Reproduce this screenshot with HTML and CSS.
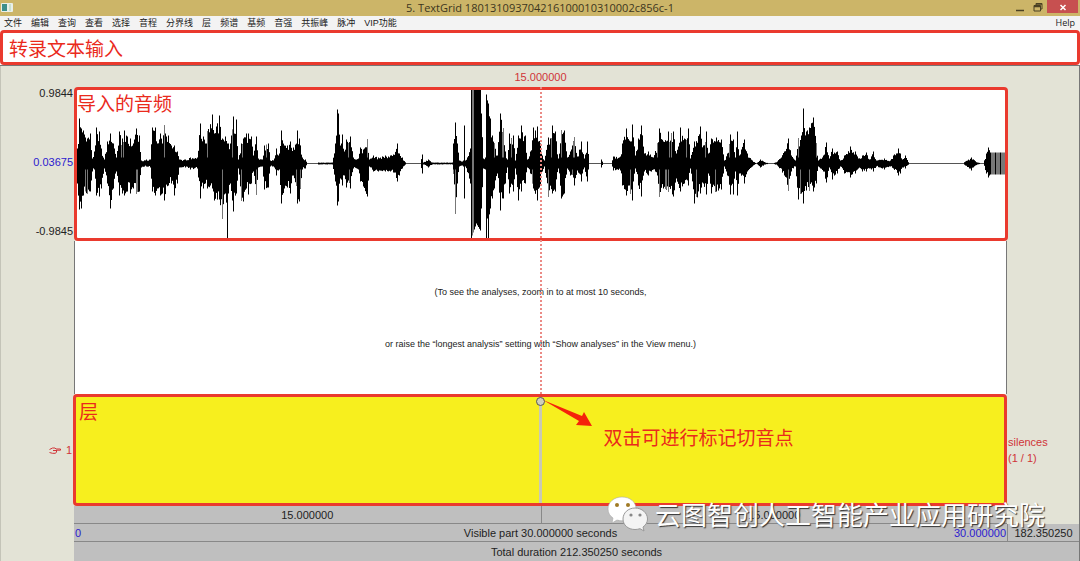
FILE: index.html
```html
<!DOCTYPE html>
<html lang="zh-CN">
<head>
<meta charset="utf-8">
<title>TextGrid</title>
<link rel="stylesheet" href="styles.css">
</head>
<body>
<header class="titlebar">
  <svg class="app-icon" viewBox="0 0 12 9" aria-hidden="true"><rect width="12" height="9" rx="1" fill="#e9efe9"/><rect x="1" y="1" width="5" height="7" fill="#3d8f8b"/><rect x="8" y="1" width="2" height="7" fill="#c9e0cf"/></svg>
  <h1 class="title">5. TextGrid 180131093704216100010310002c856c-1</h1>
  <div class="window-buttons">
    <button class="win-btn" type="button" aria-label="最小化"><svg class="win-icon" viewBox="0 0 10 10"><path d="M1 8.500h8" stroke="#4a4023" stroke-width="1.500"/></svg></button>
    <button class="win-btn" type="button" aria-label="还原"><svg class="win-icon" viewBox="0 0 10 10" fill="none" stroke="#4a4023"><path d="M3 3V1.500h6V7H7.500"/><path d="M1 3.500h6.500V9H1z"/><path d="M1 4.500h6.500M3 2h6" stroke-width="1.400"/></svg></button>
    <button class="win-btn close" type="button" aria-label="关闭"><svg class="win-icon" viewBox="0 0 10 10"><path d="M2.500 3l5 5M7.500 3l-5 5" stroke="#fff" stroke-width="1.500"/></svg></button>
  </div>
</header>
<nav class="menubar">
  <button type="button">文件</button>
  <button type="button">编辑</button>
  <button type="button">查询</button>
  <button type="button">查看</button>
  <button type="button">选择</button>
  <button type="button">音程</button>
  <button type="button">分界线</button>
  <button type="button">层</button>
  <button type="button">频谱</button>
  <button type="button">基频</button>
  <button type="button">音强</button>
  <button type="button">共振峰</button>
  <button type="button">脉冲</button>
  <button type="button">VIP功能</button>
  <button type="button" class="help">Help</button>
</nav>
<div class="transcript"><input class="transcript-input marked" type="text" aria-label="转录文本" value="转录文本输入"></div>
<main class="editor">
  <div class="gutter levels">
    <span>0.9844</span>
    <span class="blue">0.03675</span>
    <span>-0.9845</span>
  </div>
  <div class="cursor-time">15.000000</div>
  <section class="wave marked">
    <svg class="wave-plot" viewBox="77 0 928 148" preserveAspectRatio="none" aria-hidden="true">
      <path class="axis" d="M77 73.500H1005"/>
      <path id="signal" class="signal"/>
      <path id="fringe" class="fringe"/>
    </svg>
    <h2 class="note">导入的音频</h2>
  </section>
  <section class="analyses">
    <p>(To see the analyses, zoom in to at most 10 seconds,</p>
    <p>or raise the “longest analysis” setting with “Show analyses” in the View menu.)</p>
  </section>
  <div class="cursor-line"></div>
  <div class="gutter tier-number">
    <svg class="hand" viewBox="0 0 12 7" aria-hidden="true"><path d="M.5 2.500L3.500 1h2.500l1 1h4.500v1.200H7.500M.5 5.500l3 .8h3l1-1.300V3" fill="none" stroke="#d03438"/><path d="M4 3h4v1H4z" fill="#d03438"/></svg>
    <span>1</span>
  </div>
  <section class="tier marked">
    <h2 class="note">层</h2>
    <div class="boundary"><span class="handle"></span></div>
    <div class="callout">
      <svg class="arrow" viewBox="0 0 50 28" aria-hidden="true"><path d="M0 0L39 16l2-4 8 14-16-1 3-4z" fill="#f5230a"/></svg>
      <span>双击可进行标记切音点</span>
    </div>
  </section>
  <div class="gutter tier-name"><span>silences</span><span>(1 / 1)</span></div>
  <div class="bar halves"><button type="button">15.000000</button><button type="button">15.000000</button></div>
  <div class="bar visible">
    <span class="blue">0</span><button type="button">Visible part 30.000000 seconds</button><span class="blue end">30.000000</span>
  </div>
  <button class="bar rest" type="button">182.350250</button>
  <button class="bar total" type="button">Total duration 212.350250 seconds</button>
</main>
<aside class="watermark">
  <svg class="wechat" viewBox="0 0 42 36" aria-hidden="true">
    <path d="M15 1C7 1 1 6 1 13c0 4 2 7 5 9l-1 5 5-3c2 .6 3 .8 5 .8 8 0 14-5 14-12S23 1 15 1z" fill="#fff" stroke="#aaa" stroke-width=".6"/>
    <path d="M28 12c-7 0-12 5-12 11s5 10.500 12 10.500c2 0 3-.3 5-.8l4 2.300-1-4c3-2 4.500-5 4.500-8 0-6-5.500-11-12.500-11z" fill="#f4f4f4" stroke="#999" stroke-width="1"/>
    <g fill="#a07a25"><circle cx="10" cy="9" r="2"/><circle cx="21" cy="9" r="2"/></g>
    <g fill="#888"><circle cx="24" cy="19" r="1.600"/><circle cx="33" cy="19" r="1.600"/></g>
  </svg>
  <span>云图智创人工智能产业应用研究院</span>
</aside>
<script src="wave.js"></script>
</body>
</html>
```
FILE: styles.css
```css
* { box-sizing: border-box; }

body {
  margin: 0;
  min-height: 100vh;
  display: flex;
  flex-direction: column;
  position: relative;
  background: #e3e3d6;
  color: #222;
  font: 11px/16px "Liberation Sans", "Noto Sans CJK SC", sans-serif;
}

button {
  margin: 0;
  padding: 0;
  border: 0;
  background: none;
  color: inherit;
  font: inherit;
}

h1, h2, p { margin: 0; font-weight: 400; }

.blue { color: #2c20cf; }

.marked {
  border: 3px solid #ea3a2e;
  border-radius: 4px;
}

.titlebar {
  display: grid;
  grid-template-columns: 1fr auto 1fr;
  height: 16px;
  background: #ccb568;
}
.app-icon { width: 12px; height: 9px; margin: 3px 0 0 1px; }
.title { font: 11px/16px "Open Sans", sans-serif; color: #3c3520; }
.window-buttons { display: flex; justify-content: flex-end; padding-right: 2px; }
.win-btn { width: 18px; height: 13px; display: grid; place-items: center; }
.win-btn.close { width: 31px; background: #c75050; }
.win-icon { width: 10px; height: 10px; }

.menubar {
  display: flex;
  gap: 9px;
  height: 14px;
  padding: 0 5px 0 4px;
  background: #f3f3f3;
  font: 9px/14px "Liberation Sans", "Noto Sans CJK SC", sans-serif;
}
.help { margin-left: auto; font-family: "Open Sans", sans-serif; }

.transcript { height: 36px; border-bottom: 1px solid #777; background: #fff; }
.transcript-input {
  display: block;
  width: 100%;
  height: 35px;
  padding: 0 6px;
  background: #fff;
  color: #ea2a1c;
  font: 19px/28px "Noto Sans CJK SC", sans-serif;
}

.editor {
  flex: 1;
  display: grid;
  position: relative;
  grid-template-columns: 73px 1fr 72px;
  grid-template-rows: 21px 154fr 153fr 112fr 18px 18px 19px;
  border-left: 1px solid #c4c4b8;
  border-right: 1px solid #777;
  border-bottom: 1px solid #777;
}

.gutter { color: #222; }
.levels {
  grid-area: 2 / 1;
  display: flex;
  flex-direction: column;
  justify-content: space-between;
  align-items: flex-end;
  padding: 0 1px 2px 0;
  margin-top: -2px;
}
.cursor-time { grid-area: 1 / 2; text-align: center; line-height: 22px; color: #d03438; }

.wave {
  grid-area: 2 / 2;
  display: grid;
  margin-right: -1px;
  background: #fff;
}
.wave > * { grid-area: 1 / 1; }
.wave-plot { width: 100%; height: 100%; }
.axis { stroke: #555; stroke-width: 1; }
.signal { stroke: #000; stroke-width: 1; }
.fringe { stroke: #777; stroke-width: 1; }
.note { color: #ea2a1c; font: 19px/26px "Noto Sans CJK SC", sans-serif; }

.analyses {
  grid-area: 3 / 2;
  display: flex;
  flex-direction: column;
  justify-content: center;
  gap: 36px;
  border: solid #777;
  border-width: 0 1px;
  background: #fff;
  text-align: center;
  font-size: 9px;
}

.cursor-line {
  grid-area: 2 / 2 / 4 / 3;
  justify-self: center;
  width: 0;
  z-index: 1;
  border-left: 2px dotted #eb8a85;
}

.tier-number {
  grid-area: 4 / 1;
  display: flex;
  justify-content: flex-end;
  align-items: center;
  gap: 5px;
  padding-right: 2px;
  color: #d03438;
}
.hand { width: 12px; height: 7px; }

.tier {
  grid-area: 4 / 2;
  display: grid;
  grid-template-columns: 1fr 5px 1fr;
  margin: 0 0 0 -1px;
  background: #f7ef1e;
}
.tier .note { padding: 1px 0 0 3px; }
.boundary { display: flex; justify-content: center; background: #c9c9b4; width: 3px; justify-self: center; }
.handle {
  flex: none;
  width: 9px;
  height: 9px;
  border: 1px solid #555;
  border-radius: 50%;
  background: #d0d0b8;
}
.callout {
  display: flex;
  gap: 11px;
  padding-top: 3px;
  color: #ea2a1c;
  font: 19px/26px "Noto Sans CJK SC", sans-serif;
}
.callout span { padding-top: 24px; }
.arrow { width: 50px; height: 28px; }

.tier-name {
  grid-area: 4 / 3;
  display: flex;
  flex-direction: column;
  justify-content: center;
  padding-left: 1px;
  color: #d03438;
}

.bar { background: #bfbfbf; border-bottom: 1px solid #888; line-height: 18px; }
.halves { grid-area: 5 / 2; display: grid; grid-template-columns: 1fr 1fr; }
.halves button + button { border-left: 1px solid #888; }
.visible { grid-area: 6 / 2; display: grid; grid-template-columns: 1fr auto 1fr; padding: 0 1px; }
.end { text-align: right; }
.rest { grid-area: 6 / 3; border-left: 1px solid #888; }
.total { grid-area: 7 / 2 / 8 / 4; border-bottom: 0; }

.watermark {
  position: absolute;
  right: 35px;
  bottom: 29px;
  z-index: 2;
  display: flex;
  align-items: center;
  gap: 6px;
  color: #fff;
  font: 26px/38px "Noto Sans CJK SC", sans-serif;
  text-shadow: 1px 1px 1px #333;
}
.wechat { width: 42px; height: 36px; }
```
FILE: wave.js
```js
// Envelope samples: x, peak above the axis, peak below the axis.
const envelope = `77 15 20,79 45 46,81 35 45,83 33 32,87 25 30,90 30 28,92 5 8,94 12 6,96 36 32,99 32 33,101 15 25,104 4 5,
107 22 20,110 30 45,113 20 25,116 6 8,119 32 32,122 25 30,124 33 32,127 27 28,130 25 30,133 20 25,136 35 30,139 28 28,141 3 4,
146 4 3,150 4 4,152 36 28,155 36 32,157 20 25,160 30 32,162 20 30,164 38 37,168 28 22,171 18 20,174 18 32,177 12 20,179 4 4,
185 4 4,190 6 6,197 6 5,200 40 35,203 27 25,207 32 25,212 49 25,214 30 37,219 48 36,222 25 55,225 27 30,227 20 75,228 20 30,230 20 20,
233 47 48,236 44 30,238 4 5,241 20 37,243 25 38,246 30 25,248 30 31,251 27 20,253 8 8,256 27 31,258 5 4,262 4 3,264 18 26,268 20 24,
270 3 3,274 5 4,276 15 12,279 10 6,281 33 40,284 18 25,287 18 24,290 22 30,293 16 12,297 33 40,299 25 38,302 6 6,305 4 5,307 0 0,
316 0 0,318 1 1,332 1 1,335 20 18,337 54 42,338 50 38,340 18 15,342 29 22,344 12 12,346 24 24,350 27 25,353 6 5,358 5 6,360 16 18,
363 14 23,367 24 33,369 4 3,373 8 8,378 6 8,385 8 8,390 8 8,393 9 9,397 20 18,399 10 12,402 6 5,406 0 0,420 0 0,422 9 10,423 1 1,
428 4 4,432 1 1,452 1 1,453 20 10,455 41 50,457 20 20,459 3 3,463 3 3,464 38 35,465 3 3,470 15 20,471 74 75,476 74 60,480 74 67,481 50 45,
483 5 5,485 6 6,486 69 75,488 60 75,490 45 45,492 28 35,494 20 25,497 8 10,500 50 47,503 35 35,505 12 20,507 4 4,509 30 30,513 28 28,
515 3 5,518 28 37,521 38 28,525 28 20,527 4 4,530 12 10,533 36 25,537 37 37,540 20 22,542 8 8,544 3 3,548 26 33,552 38 30,555 32 28,
558 5 5,561 33 35,564 33 30,567 6 5,570 12 12,574 26 22,577 7 7,581 22 18,584 5 4,587 22 18,589 0 0,600 0 0,601 4 4,603 0 0,611 0 0,
613 7 7,620 7 7,622 20 22,626 35 32,630 22 30,632 39 37,635 8 5,638 25 22,641 38 33,644 10 8,648 12 12,653 6 6,657 20 12,659 35 33,
663 22 25,668 32 28,673 32 33,676 10 15,680 36 28,684 25 20,688 35 22,690 5 5,694 22 40,700 37 30,703 18 20,706 32 31,708 10 10,
711 25 30,716 26 28,721 24 26,724 3 3,727 10 12,730 29 31,733 24 31,735 6 8,737 32 32,739 8 10,744 24 20,747 10 8,752 3 3,756 0 0,
760 4 4,765 1 1,772 0 0,777 2 2,784 12 12,788 25 27,791 8 8,795 3 3,798 25 36,801 28 30,803 55 40,806 32 27,809 36 27,813 46 28,
816 20 20,818 3 3,823 8 8,826 21 19,829 5 4,832 15 16,837 12 10,840 3 3,844 8 10,850 17 14,855 12 10,858 5 5,862 8 8,866 11 8,
869 4 5,873 12 8,876 3 3,884 5 6,890 3 3,893 8 5,898 15 12,900 10 10,902 4 4,905 8 5,909 0 0,962 0 0,965 2 2,971 6 7,977 1 1,
983 0 0,986 10 10,988 16 14,990 11 11,1005 11 11`
  .split(",").map(s => s.trim().split(" ").map(Number));

const axis = 73.5;
let signal = "";
let fringe = "";
let seed = 7;
const random = () => (seed = (seed * 16807) % 2147483647) / 2147483647;

for (let i = 0; i < envelope.length - 1; i++) {
  const [x0, u0, d0] = envelope[i];
  const [x1, u1, d1] = envelope[i + 1];
  for (let x = x0; x < x1; x++) {
    const t = (x - x0) / (x1 - x0);
    const steady = x === x0 || x > 989 || (x > 470 && x < 481);
    const up = (u0 + (u1 - u0) * t) * (steady ? 1 : 0.65 + 0.35 * random());
    const down = (d0 + (d1 - d0) * t) * (steady ? 1 : 0.65 + 0.35 * random());
    if (up + down < 1) continue;
    const px = x + 0.5;
    const bar = `M${px} ${(axis - up).toFixed(1)}V${(axis + down).toFixed(1)}`;
    const stripe = x > 989 ? x % 5 !== 0 : (x > 471 && x < 474);
    if (stripe) fringe += bar;
    else signal += bar;
    // Thin lighter slits inside dense bursts
    if (!stripe && up > 18 && random() < 0.16) {
      fringe += random() < 0.5
        ? `M${px} ${(axis - up).toFixed(1)}V${axis - 6}`
        : `M${px} ${axis + 6}V${(axis + down).toFixed(1)}`;
    }
  }
}

document.getElementById("signal").setAttribute("d", signal);
document.getElementById("fringe").setAttribute("d", fringe);
```
